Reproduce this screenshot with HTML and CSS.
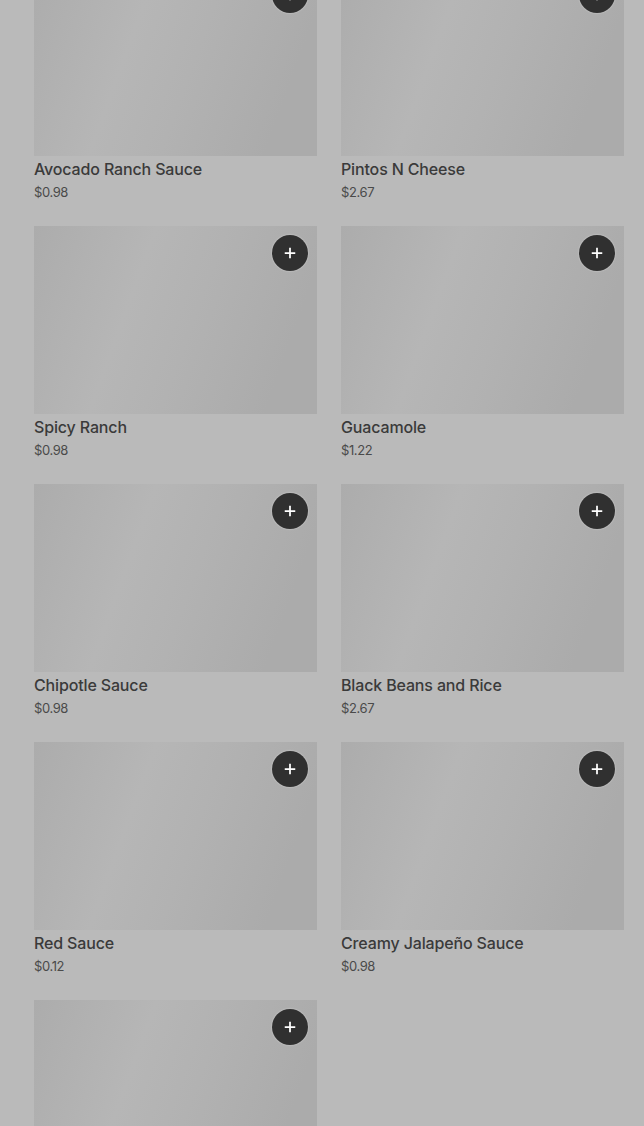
FILE: index.html
```html
<!DOCTYPE html>
<html>
<head>
<meta charset="utf-8">
<link rel="stylesheet" href="styles.css">
</head>
<body>
<div class="grid">
  <div class="card"><div class="img"><button class="add"><svg viewBox="0 0 16 16" width="14" height="14"><path d="M8 2v12M2 8h12" stroke="#fff" stroke-width="2" fill="none"/></svg></button></div><div class="name">Avocado Ranch Sauce</div><div class="price">$0.98</div></div>
  <div class="card"><div class="img"><button class="add"><svg viewBox="0 0 16 16" width="14" height="14"><path d="M8 2v12M2 8h12" stroke="#fff" stroke-width="2" fill="none"/></svg></button></div><div class="name">Pintos N Cheese</div><div class="price">$2.67</div></div>
  <div class="card"><div class="img"><button class="add"><svg viewBox="0 0 16 16" width="14" height="14"><path d="M8 2v12M2 8h12" stroke="#fff" stroke-width="2" fill="none"/></svg></button></div><div class="name">Spicy Ranch</div><div class="price">$0.98</div></div>
  <div class="card"><div class="img"><button class="add"><svg viewBox="0 0 16 16" width="14" height="14"><path d="M8 2v12M2 8h12" stroke="#fff" stroke-width="2" fill="none"/></svg></button></div><div class="name">Guacamole</div><div class="price">$1.22</div></div>
  <div class="card"><div class="img"><button class="add"><svg viewBox="0 0 16 16" width="14" height="14"><path d="M8 2v12M2 8h12" stroke="#fff" stroke-width="2" fill="none"/></svg></button></div><div class="name">Chipotle Sauce</div><div class="price">$0.98</div></div>
  <div class="card"><div class="img"><button class="add"><svg viewBox="0 0 16 16" width="14" height="14"><path d="M8 2v12M2 8h12" stroke="#fff" stroke-width="2" fill="none"/></svg></button></div><div class="name">Black Beans and Rice</div><div class="price">$2.67</div></div>
  <div class="card"><div class="img"><button class="add"><svg viewBox="0 0 16 16" width="14" height="14"><path d="M8 2v12M2 8h12" stroke="#fff" stroke-width="2" fill="none"/></svg></button></div><div class="name">Red Sauce</div><div class="price">$0.12</div></div>
  <div class="card"><div class="img"><button class="add"><svg viewBox="0 0 16 16" width="14" height="14"><path d="M8 2v12M2 8h12" stroke="#fff" stroke-width="2" fill="none"/></svg></button></div><div class="name">Creamy Jalapeño Sauce</div><div class="price">$0.98</div></div>
  <div class="card"><div class="img"><button class="add"><svg viewBox="0 0 16 16" width="14" height="14"><path d="M8 2v12M2 8h12" stroke="#fff" stroke-width="2" fill="none"/></svg></button></div></div>
</div>
</body>
</html>
```
FILE: styles.css
```css
html, body {
  margin: 0;
  padding: 0;
  background: #bababa;
  height: 100%;
  overflow: hidden;
}
body {
  font-family: Inter, "Liberation Sans", sans-serif;
}
.grid {
  display: grid;
  grid-template-columns: 283px 283px;
  column-gap: 24px;
  padding: 0 20px 0 34px;
  margin-top: -32px;
}
.card {
  height: 258px;
}
.img {
  position: relative;
  height: 188px;
  background: linear-gradient(110deg, #acacac 0%, #b6b6b6 35%, #b2b2b2 55%, #ababab 85%);
}
.add {
  position: absolute;
  top: 9px;
  right: 9px;
  width: 36px;
  height: 36px;
  border-radius: 50%;
  border: none;
  padding: 0;
  background: #303030;
  box-shadow: 0 0 2px rgba(255,255,255,0.5);
  display: flex;
  align-items: center;
  justify-content: center;
}
.name {
  margin-top: 3px;
  font-size: 16px;
  line-height: 20px;
  font-weight: 500;
  letter-spacing: -0.15px;
  color: #3a3a3a;
}
.price {
  margin-top: 4px;
  font-size: 13px;
  line-height: 18px;
  letter-spacing: -0.4px;
  color: #4a4a4a;
}
```
